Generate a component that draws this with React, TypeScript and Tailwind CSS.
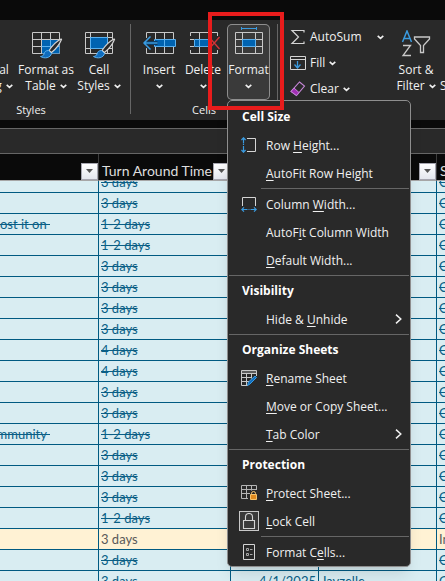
import React from "react";

type Row = { note?: string; days: string; date?: string; name?: string; next?: string; active?: boolean; clipped?: boolean };

const rows: Row[] = [
  { days: "3 days", clipped: true },
  { days: "3 days" },
  { note: "ost it on ", days: "1-2 days" },
  { days: "1-2 days" },
  { days: "3 days" },
  { days: "3 days" },
  { days: "3 days" },
  { days: "3 days" },
  { days: "4 days" },
  { days: "4 days" },
  { days: "3 days" },
  { days: "3 days" },
  { note: "mmunity ", days: "1-2 days" },
  { days: "3 days" },
  { days: "3 days" },
  { days: "3 days" },
  { days: "1-2 days" },
  { days: "3 days", next: "In", active: true },
  { days: "3 days" },
  { days: "3 days", date: "4/1/2025", name: "Jayzelle" },
];

function Chevron() {
  return (
    <svg width="7" height="5" viewBox="0 0 7 5" fill="none" stroke="#f0f0f0" strokeWidth="1.6" className="shrink-0">
      <path d="M0.7 0.9 3.5 3.4 6.3 0.9" />
    </svg>
  );
}

function Brush() {
  return (
    <g>
      <path d="M29 8C25 10 20 15 17 19.5l2.500 2C24 18 28 12 29.500 8.500Z" fill="#292929" stroke="#d4d4d4" strokeWidth="1.200" />
      <path d="M16.500 19.500c-3 0-4 1.500-4.500 3.500-.5 1.700-1.500 2.200-3.500 2.500 4 2.500 10 1.500 11-3Z" fill="#0f6cbd" stroke="#5ab0ee" />
    </g>
  );
}

function FormatTableIcon() {
  return (
    <svg width="28" height="28" viewBox="0 0 28 28" fill="none" className="overflow-visible">
      <path d="M.5 1.500h27v21H.5zM.5 8.500h27M.5 15.500h27M9.500 1.500v21M18.500 1.500v21" stroke="#c8c8c8" />
      <path d="M10 9h17.500v13.500H10z" fill="#0063b1" />
      <path d="M9.500 15.500h18M18.500 8.500v14" stroke="#5ab0ee" />
      <Brush />
    </svg>
  );
}

function CellStylesIcon() {
  return (
    <svg width="28" height="28" viewBox="0 0 28 28" fill="none" className="overflow-visible">
      <path d="M.5 1.500h27v21H.5zM.5 6.500h27M.5 17.500h27M5.500 1.500v21M22.500 1.500v21" stroke="#c8c8c8" />
      <path d="M5.500 6.500h17v11h-17z" fill="#0063b1" stroke="#5ab0ee" />
      <Brush />
    </svg>
  );
}

function InsertIcon() {
  return (
    <svg width="32" height="28" viewBox="0 0 32 28" fill="none" className="overflow-visible">
      <path d="M3.500 7V1.500h27V8M12.500 1.500V8M21.500 1.500V8M3.500 17v5.500h27V16M12.500 16v6.500M21.500 16v6.500" stroke="#c8c8c8" />
      <path d="M11.500 8.500h21v7h-21z" fill="#0063b1" stroke="#5ab0ee" />
      <path d="M21.500 8.500v7" stroke="#5ab0ee" />
      <path d="M7.500 5.500 1 12l6.500 6.500" stroke="#292929" strokeWidth="3.500" />
      <path d="M1 12h13.500" stroke="#0f3c63" strokeWidth="4" />
      <path d="M1 12h13.500M7.500 5.500 1 12l6.500 6.500" stroke="#3a9be0" strokeWidth="1.500" />
    </svg>
  );
}

function DeleteIcon() {
  return (
    <svg width="32" height="28" viewBox="0 0 32 28" fill="none" className="overflow-visible">
      <path d="M3.500 5V1.500h27V5M12.500 1.500V8M21.500 1.500V8M3.500 19v3.500h27V19M12.500 16v6.500M21.500 16v6.500M3 8.500h4M3 15.500h4" stroke="#c8c8c8" />
      <path d="M7.500 8.500h14l3 3.500-3 3.500h-14z" fill="#0063b1" stroke="#5ab0ee" />
      <path d="M12.500 8.500v7M21.500 8.500v7" stroke="#5ab0ee" />
      <path d="m22 6 10.500 12M32.500 6 22 18" stroke="#292929" strokeWidth="3.500" />
      <path d="m22 6 10.500 12M32.500 6 22 18" stroke="#d13438" strokeWidth="1.300" />
    </svg>
  );
}

function FormatIcon() {
  return (
    <svg width="28" height="28" viewBox="0 0 28 28" fill="none" className="-mt-1">
      <path d="M.5 5.500h27v21H.5zM.5 12.500h27M.5 19.500h27M7.500 5.500v21M20.500 5.500v21" stroke="#c8c8c8" />
      <path d="M7.500 12.500h13v7h-13z" fill="#0063b1" stroke="#5ab0ee" />
      <path d="M6.500 0v3M21.500 0v3M6.500 1.500h15" stroke="#3a9be0" />
    </svg>
  );
}

function SumIcon() {
  return (
    <svg width="16" height="16" viewBox="0 0 16 16" fill="none" stroke="#d4d4d4" strokeWidth="1.200">
      <path d="M14 3.500V1.500H2l6.500 6.500L2 14.500h12v-2" />
    </svg>
  );
}

function FillIcon() {
  return (
    <svg width="16" height="16" viewBox="0 0 16 16" fill="none">
      <path d="M.5 1.500h15v13H.5zM.5 4.500h15" stroke="#d4d4d4" />
      <path d="M7.500 6v7M4.500 9.500l3 3.500 3-3.500" stroke="#3a9be0" strokeWidth="1.300" />
    </svg>
  );
}

function EraserIcon() {
  return (
    <svg width="16" height="16" viewBox="0 0 16 16" fill="none">
      <path d="M9.500 1 14.500 5 6.500 14.500 1 10.500Z" stroke="#c586d6" strokeWidth="1.100" />
      <path d="M4 7 9 11.500 6.500 14.500 1 10.500Z" fill="#a22fb5" stroke="#c586d6" />
    </svg>
  );
}

function SortFilterIcon() {
  return (
    <svg width="30" height="28" viewBox="0 0 30 28" fill="none" strokeWidth="1.300" className="-mt-px">
      <path d="M1.500 12 6 1l4.500 11M3 8.500h6" stroke="#3a9be0" strokeWidth="1.500" />
      <path d="M2 15.500h7.500L2 25.500h8" stroke="#c8c8c8" />
      <path d="M13.500 7h15v2l-6 6.500v7h-3v-7l-6-6.500Z" stroke="#c8c8c8" />
    </svg>
  );
}

function RowHeightIcon() {
  return (
    <svg width="16" height="16" viewBox="0 0 16 16" fill="none">
      <path d="M6 1.500h8.500v13H6" stroke="#d4d4d4" />
      <path d="M2.500.8v5.700M.4 3l2.100-2.200L4.600 3M2.500 9v6.200M.4 13l2.100 2.200L4.600 13M2.500 7v1" stroke="#3a9be0" strokeWidth="1.200" />
    </svg>
  );
}

function ColumnWidthIcon() {
  return (
    <svg width="16" height="16" viewBox="0 0 16 16" fill="none">
      <path d="M1.500 10V1.500h13V10" stroke="#d4d4d4" />
      <path d="M.8 13.500h5.700M3 11.400.8 13.500 3 15.600M9.500 13.500h5.700M13 11.400l2.200 2.100-2.200 2.100M7.500 13.500h1" stroke="#3a9be0" strokeWidth="1.200" />
    </svg>
  );
}

function RenameIcon() {
  return (
    <svg width="16" height="16" viewBox="0 0 16 16" fill="none">
      <path d="M.5.5h15v3H.5z" fill="#5c5c5c" />
      <path d="M7 15.500H.5V.5h15V6M.5 3.500h15M.5 7.500H11M.5 11.500H8M5.500 3.500v12M10.500 3.500v5" stroke="#c8c8c8" />
      <path d="m6.500 15.500 1-3.500 6.500-6 1.500 1.500-6.500 6.500Z" fill="#0f6cbd" stroke="#3a9be0" />
    </svg>
  );
}

function ProtectIcon() {
  return (
    <svg width="16" height="16" viewBox="0 0 16 16" fill="none">
      <path d="M7 13.500H.5V.5h15V5M.5 4.500h15M.5 8.500H9M5.500.5v13M10.500.5v5" stroke="#b4b4b4" />
      <path d="M10.500 10V8.500a2 2 0 0 1 4 0V10" stroke="#f5c26b" />
      <path d="M9.500 9.500h6v5h-6z" fill="#e08a1e" stroke="#f5c26b" />
    </svg>
  );
}

function LockIcon() {
  return (
    <span className="flex h-5 w-5 items-center justify-center border border-[#c8c8c8] bg-[#3a3a3a]">
      <svg width="14" height="16" viewBox="0 0 14 16" fill="none" stroke="#d4d4d4" strokeWidth="1.100">
        <path d="M1.500 7.500h11v8h-11zM3.500 7.500V4a3.500 3.500 0 0 1 7 0v3.500" />
      </svg>
    </span>
  );
}

function FormatCellsIcon() {
  return (
    <svg width="16" height="16" viewBox="0 0 16 16" fill="none" stroke="#d4d4d4">
      <path d="M2.500.5h11v15h-11z" />
      <path d="M5.500 4.500h2v2h-2zM5.500 9.500h2v2h-2zM9 5.500h2.500M9 10.500h2.500" stroke="#a8a8a8" />
    </svg>
  );
}

function RibbonButton({ icon, top, bottom, className }: { icon: React.ReactNode; top: string; bottom?: string; className: string }) {
  return (
    <button type="button" className={`flex h-[76px] shrink-0 flex-col items-center pt-[7px] leading-4 whitespace-nowrap ${className}`}>
      <span className="flex h-[31px] items-start justify-center">{icon}</span>
      <span>{top}</span>
      <span className="flex h-4 items-center gap-1">
        {bottom}
        <Chevron />
      </span>
    </button>
  );
}

function ToolButton({ icon, label, wide }: { icon: React.ReactNode; label: string; wide?: boolean }) {
  return (
    <button type="button" className={`flex h-[26px] items-center ${wide ? "w-[94px] justify-between" : "gap-1"}`}>
      <span className="flex items-center gap-1">
        {icon}
        {label}
      </span>
      <Chevron />
    </button>
  );
}

function Heading({ children }: { children: React.ReactNode }) {
  return <h2 className="flex h-7 items-center pl-[14px] font-bold text-white">{children}</h2>;
}

function Rule({ inset }: { inset?: boolean }) {
  return <hr className={`mt-px mr-px mb-px border-t border-[#666666] ${inset ? "ml-[33px]" : "ml-px"}`} />;
}

/* The character at `accel` is the item's underlined access key. */
function Item({ label, accel, icon, submenu }: { label: string; accel: number; icon?: React.ReactNode; submenu?: boolean }) {
  return (
    <button type="button" role="menuitem" className="flex h-7 w-full items-center gap-[7px] pr-2 pl-[11px] text-left whitespace-nowrap">
      <span className="flex w-5 shrink-0 items-center justify-center">{icon}</span>
      <span className="flex-1 pt-px">
        {label.slice(0, accel)}
        <u className="underline-offset-2">{label[accel]}</u>
        {label.slice(accel + 1)}
      </span>
      {submenu && (
        <svg width="7" height="10" viewBox="0 0 7 10" fill="none" stroke="#f0f0f0" strokeWidth="1.500">
          <path d="m1 .6 4.800 4.400L1 9.400" />
        </svg>
      )}
    </button>
  );
}

function FilterButton() {
  return (
    <button type="button" aria-label="Filter" className="flex h-[17px] w-[17px] shrink-0 items-center justify-center border border-[#a6a6b0] bg-linear-to-b from-white to-[#e4e7ee]">
      <svg width="7" height="4" viewBox="0 0 7 4" fill="#555555">
        <path d="M0 0h7L3.500 4Z" />
      </svg>
    </button>
  );
}

function HeaderCell({ title, filter }: { title?: string; filter?: boolean }) {
  return (
    <th className="h-[27px] border-r border-b border-r-[#3c3c3c] border-b-[#a6a6a6] bg-[#0a0a0a] p-0 align-bottom text-[14px] leading-[18px] font-normal text-[#dedede]">
      <div className="flex h-[18px] items-center justify-between overflow-hidden whitespace-nowrap">
        <span className="pl-[3px]">{title}</span>
        {filter && <FilterButton />}
      </div>
    </th>
  );
}

function Cell({ row, text, align = "left" }: { row: Row; text?: string; align?: "left" | "right" | "spill" }) {
  return (
    <td className={`overflow-hidden border-r border-b border-[#005a82] p-0 ${row.active ? "bg-[#fff2d4] text-[#595959]" : "bg-[#d9edf2] text-[#0a5f86] line-through"}`}>
      <div
        className={`flex items-end overflow-hidden leading-[19px] whitespace-pre ${row.clipped ? "h-[11px]" : "h-5"} ${
          align === "right" ? "justify-end px-[2px]" : align === "spill" ? "w-[50px] justify-end" : "px-[2px]"
        }`}
      >
        {text}
      </div>
    </td>
  );
}

export default function App() {
  return (
    <main className="relative h-screen overflow-hidden bg-[#0a0a0a] font-['Open_Sans','Noto_Sans',sans-serif] text-[12px] text-[#f0f0f0]">
      <div className="h-5" />
      <section aria-label="Ribbon" className="flex h-[100px] overflow-hidden bg-[#292929] pt-1">
        <div className="w-[130px] shrink-0">
          <div className="flex">
            <RibbonButton icon={null} top="al" bottom="g" className="mr-[10px] w-2" />
            <RibbonButton icon={<FormatTableIcon />} top="Format as" bottom="Table" className="w-[56px]" />
            <RibbonButton icon={<CellStylesIcon />} top="Cell" bottom="Styles" className="w-[50px]" />
          </div>
          <p className="w-[62px] text-center text-[11px] leading-5">Styles</p>
        </div>
        <div className="h-[90px] w-px shrink-0 bg-[#666666]" />
        <div className="w-[146px] shrink-0">
          <div className="flex pl-[6px]">
            <RibbonButton icon={<InsertIcon />} top="Insert" className="w-[44px]" />
            <RibbonButton icon={<DeleteIcon />} top="Delete" className="w-[44px]" />
            <RibbonButton icon={<FormatIcon />} top="Format" className="ml-[2px] w-[43px] rounded-[5px] bg-[#3a3a3a] ring-1 ring-[#8e8e8e] ring-inset" />
          </div>
          <p className="text-center text-[11px] leading-5">Cells</p>
        </div>
        <div className="h-[90px] w-px shrink-0 bg-[#666666]" />
        <div className="flex w-[119px] shrink-0 flex-col items-start pl-3">
          <ToolButton icon={<SumIcon />} label="AutoSum" wide />
          <ToolButton icon={<FillIcon />} label="Fill" />
          <ToolButton icon={<EraserIcon />} label="Clear" />
        </div>
        <RibbonButton icon={<SortFilterIcon />} top="Sort &" bottom="Filter" className="w-[38px]" />
        <button type="button" className="shrink-0 self-start pt-[54px] pl-[5px] leading-4">
          Select
        </button>
      </section>
      <div className="mt-2 h-[26px] border-y border-[#666666] bg-[#292929]" />

      <table className="w-full min-w-[480px] table-fixed border-separate border-spacing-0 font-['Lato','Open_Sans',sans-serif] text-[13px]">
        <colgroup>
          <col className="w-[99px]" />
          <col className="w-[132px]" />
          <col className="w-[88px]" />
          <col className="w-[118px]" />
          <col />
        </colgroup>
        <thead>
          <tr className="text-left">
            <HeaderCell filter />
            <HeaderCell title="Turn Around Time" filter />
            <HeaderCell />
            <HeaderCell filter />
            <HeaderCell title="S" />
          </tr>
        </thead>
        <tbody>
          {rows.map((row, i) => (
            <tr key={i}>
              <Cell row={row} text={row.note} align="spill" />
              <Cell row={row} text={row.days} />
              <Cell row={row} text={row.date} align="right" />
              <Cell row={row} text={row.name} />
              <Cell row={row} text={row.next ?? "C"} />
            </tr>
          ))}
        </tbody>
      </table>

      <div role="menu" aria-label="Format" className="absolute top-[100px] left-[227px] w-[184px] rounded-[5px] border border-[#8e8e8e] bg-[#292929] pt-[2px] shadow-lg">
        <Heading>Cell Size</Heading>
        <Item label="Row Height..." accel={4} icon={<RowHeightIcon />} />
        <Item label="AutoFit Row Height" accel={0} />
        <Rule inset />
        <Item label="Column Width..." accel={7} icon={<ColumnWidthIcon />} />
        <Item label="AutoFit Column Width" accel={5} />
        <Item label="Default Width..." accel={0} />
        <Rule />
        <Heading>Visibility</Heading>
        <Item label="Hide & Unhide" accel={7} submenu />
        <Rule />
        <Heading>Organize Sheets</Heading>
        <Item label="Rename Sheet" accel={0} icon={<RenameIcon />} />
        <Item label="Move or Copy Sheet..." accel={0} />
        <Item label="Tab Color" accel={0} submenu />
        <Rule />
        <Heading>Protection</Heading>
        <Item label="Protect Sheet..." accel={0} icon={<ProtectIcon />} />
        <Item label="Lock Cell" accel={0} icon={<LockIcon />} />
        <Rule inset />
        <Item label="Format Cells..." accel={8} icon={<FormatCellsIcon />} />
      </div>

      <div className="pointer-events-none absolute top-3 left-[208px] h-[98px] w-[76px] border-4 border-[#e81c1c]" />
    </main>
  );
}
